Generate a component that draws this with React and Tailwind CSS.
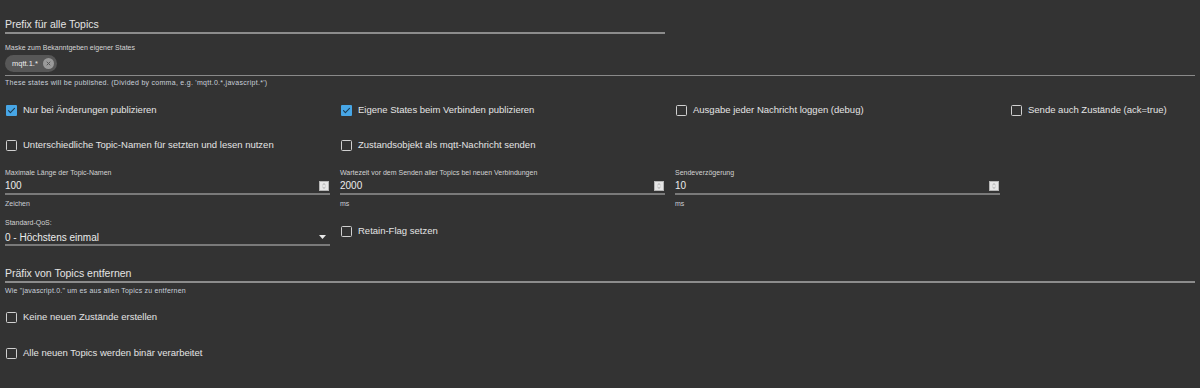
import React from "react";

const font = { fontFamily: '"Liberation Sans", Arial, sans-serif' };

function Check({ checked, label }) {
  return (
    <div className="flex h-[20px] items-center">
      {checked ? (
        <span className="ml-[1px] flex h-[11px] w-[11px] items-center justify-center rounded-[1px] bg-[#47a6e6]">
          <svg width="9" height="9" viewBox="0 0 24 24" fill="none" stroke="#1d3b52" strokeWidth="3" strokeLinecap="round" strokeLinejoin="round">
            <path d="M4 12.5l5 5L20 6.5" />
          </svg>
        </span>
      ) : (
        <span className="ml-[1px] h-[11px] w-[11px] rounded-[1.5px] border-[1.5px] border-[#d0d0d0]" />
      )}
      <span className="ml-[6px] text-[9.5px] text-[#e4e4e4]">{label}</span>
    </div>
  );
}

function Spinner() {
  return (
    <span className="flex h-[10px] w-[10px] flex-col items-center justify-center border border-[#b5b5b5] bg-[#e6e6e6]">
      <svg width="6" height="8" viewBox="0 0 6 8" fill="none" stroke="#9a9a9a" strokeWidth="0.8">
        <path d="M1.5 3L3 1.6 4.5 3" />
        <path d="M1.5 5L3 6.4 4.5 5" />
      </svg>
    </span>
  );
}

function NumberField({ label, value, unit }) {
  return (
    <div className="flex flex-col">
      <div className="h-[9px] text-[7px] leading-[9px] text-[#d2d2d2]">{label}</div>
      <div className="mt-[1px] flex h-[17px] items-center justify-between border-b-2 border-[#7a7a7a] pr-[1px]">
        <span className="text-[10px] text-[#ececec]">{value}</span>
        <Spinner />
      </div>
      <div className="mt-[4px] h-[9px] text-[7px] leading-[9px] text-[#c9ced6]">{unit}</div>
    </div>
  );
}

export default function App() {
  return (
    <div style={font} className="h-[388px] w-[1200px] overflow-hidden bg-[#333333] px-[5px] pt-[17px]">
      <div className="w-[660px] border-b-2 border-[#8c8c8c] pb-[1px] text-[10.5px] leading-[14px] text-[#e4e4e4]">
        Prefix für alle Topics
      </div>

      <div className="mt-[9px] h-[9px] text-[7px] leading-[9px] text-[#d6d6d6]">
        Maske zum Bekanntgeben eigener States
      </div>
      <div className="mt-[3px] flex border-b border-[#8a8a8a] pb-[3px]">
        <span className="flex h-[17px] items-center rounded-full bg-[#575757] pl-[7px] pr-[3px]">
          <span className="text-[7.5px] leading-[9px] text-[#ececec]">mqtt.1.*</span>
          <span className="ml-[5px] flex h-[11px] w-[11px] items-center justify-center rounded-full bg-[#9a9a9a]">
            <svg width="5" height="5" viewBox="0 0 10 10" stroke="#575757" strokeWidth="2" strokeLinecap="round">
              <path d="M2 2l6 6M8 2l-6 6" />
            </svg>
          </span>
        </span>
      </div>
      <div className="mt-[2px] h-[9px] text-[7px] leading-[9px] tracking-[0.28px] text-[#c9d0da]">
        These states will be published. (Divided by comma, e.g. 'mqtt.0.*,javascript.*')
      </div>

      <div className="mt-[13px] grid grid-cols-[325px_325px_325px_325px] gap-x-[10px] gap-y-[15px]">
        <Check checked label="Nur bei Änderungen publizieren" />
        <Check checked label="Eigene States beim Verbinden publizieren" />
        <Check label="Ausgabe jeder Nachricht loggen (debug)" />
        <Check label="Sende auch Zustände (ack=true)" />
        <Check label="Unterschiedliche Topic-Namen für setzten und lesen nutzen" />
        <Check label="Zustandsobjekt als mqtt-Nachricht senden" />
      </div>

      <div className="mt-[13px] grid grid-cols-[325px_325px_325px] gap-x-[10px]">
        <NumberField label="Maximale Länge der Topic-Namen" value="100" unit="Zeichen" />
        <NumberField label="Wartezeit vor dem Senden aller Topics bei neuen Verbindungen" value="2000" unit="ms" />
        <NumberField label="Sendeverzögerung" value="10" unit="ms" />
      </div>

      <div className="mt-[10px] grid grid-cols-[325px_325px] gap-x-[10px]">
        <div className="flex flex-col">
          <div className="h-[9px] text-[7px] leading-[9px] text-[#d2d2d2]">Standard-QoS:</div>
          <div className="mt-[3px] flex h-[16px] items-center justify-between border-b-2 border-[#7a7a7a] pr-[4px]">
            <span className="text-[10px] text-[#ececec]">0 - Höchstens einmal</span>
            <svg width="7" height="4" viewBox="0 0 7 4">
              <path d="M0 0h7L3.5 4z" fill="#e8e8e8" />
            </svg>
          </div>
        </div>
        <div className="mt-[3px]">
          <Check label="Retain-Flag setzen" />
        </div>
      </div>

      <div className="mt-[20px] border-b-2 border-[#8c8c8c] pb-[1px] text-[10.5px] leading-[14px] text-[#e4e4e4]">
        Präfix von Topics entfernen
      </div>
      <div className="mt-[3px] h-[9px] text-[7px] leading-[9px] tracking-[0.2px] text-[#c9d0da]">
        Wie "javascript.0." um es aus allen Topics zu entfernen
      </div>

      <div className="mt-[12px] flex flex-col gap-[16px]">
        <Check label="Keine neuen Zustände erstellen" />
        <Check label="Alle neuen Topics werden binär verarbeitet" />
      </div>
    </div>
  );
}
